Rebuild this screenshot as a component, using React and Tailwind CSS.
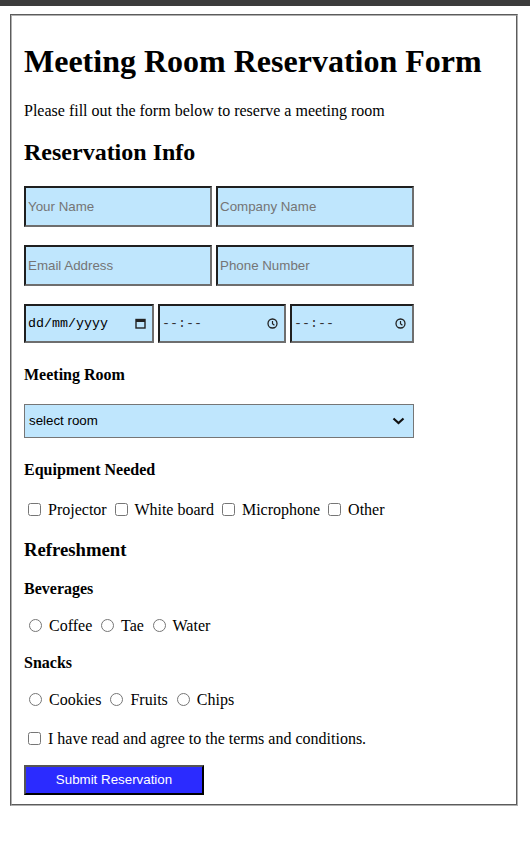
const field =
  "h-[41px] bg-[#bfe6fd] border-2 border-t-[#1f1f1f] border-l-[#1f1f1f] border-r-[#6e6e6e] border-b-[#6e6e6e] px-[2px] font-['Liberation_Sans',Arial,sans-serif] text-[13.33px] text-black placeholder:text-[#757575] outline-none";

const picker =
  "h-[39px] flex items-center justify-between bg-[#bfe6fd] border-2 border-t-[#1f1f1f] border-l-[#1f1f1f] border-r-[#6e6e6e] border-b-[#6e6e6e] pl-[2px] pr-[6px] font-['Liberation_Mono',monospace] text-[13.33px] text-black";

function CalendarIcon() {
  return (
    <svg width="11" height="11" viewBox="0 0 11 11">
      <rect x="1" y="1.5" width="9" height="8.5" fill="none" stroke="#222" strokeWidth="1.4" />
      <rect x="1" y="1.5" width="9" height="2.5" fill="#222" />
    </svg>
  );
}

function ClockIcon() {
  return (
    <svg width="11" height="11" viewBox="0 0 11 11">
      <circle cx="5.5" cy="5.5" r="4.5" fill="none" stroke="#222" strokeWidth="1.3" />
      <path d="M5.5 3v2.7l1.9 1.5" fill="none" stroke="#222" strokeWidth="1.2" />
    </svg>
  );
}

function Check({ label }) {
  return (
    <>
      <input type="checkbox" className="ml-[4px] mr-[3px] w-[13px] h-[13px] align-[-1px]" />
      {" "}
      {label}{" "}
    </>
  );
}

function Radio({ name, label }) {
  return (
    <>
      <input type="radio" name={name} className="ml-[5px] mr-[3px] w-[13px] h-[13px] align-[-1px]" />
      {" "}
      {label}{" "}
    </>
  );
}

export default function App() {
  return (
    <div className="min-h-[862px] bg-white font-['Liberation_Serif','Times_New_Roman',serif] text-black">
      <div className="h-[6px] bg-[#3c3c3c]" />
      <div className="mt-[8px] ml-[10px] w-[508px] border-2 [border-style:groove] border-[#b0b0b0] px-[12px] pb-[9px]">
        <h1 className="mt-[27px] text-[32px] leading-[37px] font-bold">Meeting Room Reservation Form</h1>
        <p className="mt-[21px] text-[16px] leading-[20px]">Please fill out the form below to reserve a meeting room</p>
        <h2 className="mt-[17px] text-[24px] leading-[28px] font-bold">Reservation Info</h2>

        <div className="mt-[20px] flex gap-[4px]">
          <input className={field + " w-[188px]"} placeholder="Your Name" />
          <input className={field + " w-[198px]"} placeholder="Company Name" />
        </div>
        <div className="mt-[18px] flex gap-[4px]">
          <input className={field + " w-[188px]"} placeholder="Email Address" />
          <input className={field + " w-[198px]"} placeholder="Phone Number" />
        </div>
        <div className="mt-[18px] flex gap-[4px]">
          <div className={picker + " w-[130px]"}>
            <span>dd/mm/yyyy</span>
            <CalendarIcon />
          </div>
          <div className={picker + " w-[128px]"}>
            <span className="text-[#333]">--:--</span>
            <ClockIcon />
          </div>
          <div className={picker + " w-[124px]"}>
            <span className="text-[#333]">--:--</span>
            <ClockIcon />
          </div>
        </div>

        <div className="mt-[22px] text-[16px] leading-[20px] font-bold">Meeting Room</div>
        <div className="mt-[19px] w-[390px] h-[34px] flex items-center justify-between bg-[#bfe6fd] border border-[#767676] pl-[4px] pr-[8px] font-['Liberation_Sans',Arial,sans-serif] text-[13.33px]">
          <span>select room</span>
          <svg width="13" height="8" viewBox="0 0 13 8">
            <path d="M1.5 1.5l5 4.5 5-4.5" fill="none" stroke="#111" strokeWidth="2.2" />
          </svg>
        </div>

        <div className="mt-[22px] text-[16px] leading-[20px] font-bold">Equipment Needed</div>
        <div className="mt-[20px] text-[16px] leading-[20px]">
          <Check label="Projector" />
          <Check label="White board" />
          <Check label="Microphone" />
          <Check label="Other" />
        </div>

        <h3 className="mt-[18px] text-[18.72px] leading-[24px] font-bold">Refreshment</h3>
        <div className="mt-[17px] text-[16px] leading-[20px] font-bold">Beverages</div>
        <div className="mt-[17px] text-[16px] leading-[20px]">
          <Radio name="bev" label="Coffee" />
          <Radio name="bev" label="Tae" />
          <Radio name="bev" label="Water" />
        </div>
        <div className="mt-[17px] text-[16px] leading-[20px] font-bold">Snacks</div>
        <div className="mt-[17px] text-[16px] leading-[20px]">
          <Radio name="snack" label="Cookies" />
          <Radio name="snack" label="Fruits" />
          <Radio name="snack" label="Chips" />
        </div>

        <div className="mt-[19px] text-[16px] leading-[20px]">
          <Check label="I have read and agree to the terms and conditions." />
        </div>

        <button className="mt-[16px] block w-[180px] h-[30px] bg-[#2b2bff] border-2 border-t-[#555] border-l-[#555] border-r-black border-b-black text-white font-['Liberation_Sans',Arial,sans-serif] text-[13.33px]">
          Submit Reservation
        </button>
      </div>
    </div>
  );
}
